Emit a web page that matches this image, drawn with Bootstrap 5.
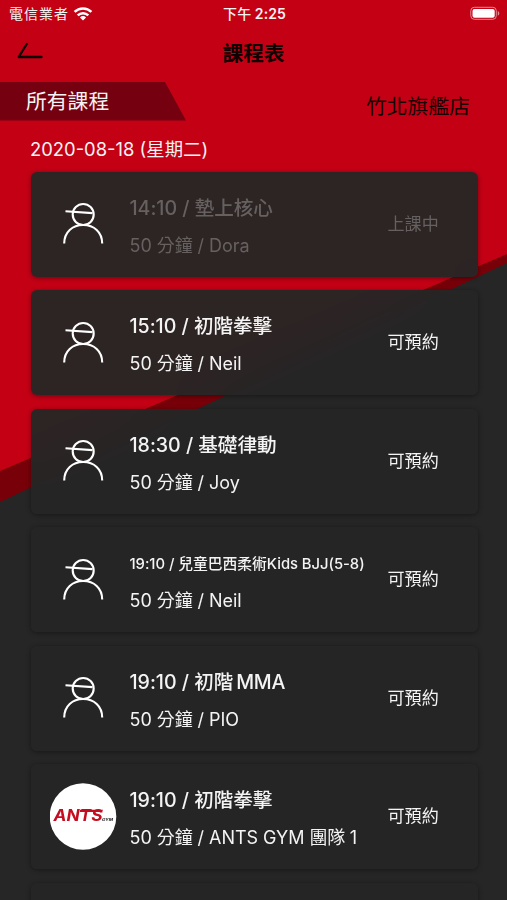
<!DOCTYPE html>
<html lang="zh-Hant">
<head>
<meta charset="utf-8">
<meta name="viewport" content="width=device-width, initial-scale=1">
<title>課程表</title>
<link href="https://cdn.jsdelivr.net/npm/bootstrap@5.3.0/dist/css/bootstrap.min.css" rel="stylesheet">
<style>
body{font-family:Inter,"Noto Sans CJK TC",sans-serif;background:#262626;color:#f4f4f4}
.screen{height:900px;isolation:isolate}
.backdrop{z-index:-1;width:507px;height:900px}
.status{height:27px;padding:0 7px 0 9px;font-size:14px;line-height:27px}
.status .side{flex:1 1 0}
.clock{font-weight:600;font-size:14px;letter-spacing:.1px}
.clock-half{font-weight:500}
.topbar{height:55px;padding:0 17px;color:#100000}
.topbar .side{flex:1 1 0}
.title{font-size:20.7px;font-weight:700;line-height:53px}
.filters{height:50px}
.tab-all{width:186px;height:38.5px;line-height:39px;padding-left:26px;font-size:20.8px;background:#75000f;clip-path:polygon(0 0,165px 0,100% 100%,0 100%)}
.branch{font-size:20.8px;line-height:50px;margin-right:37px;color:#180002}
.day{height:39.5px;padding-left:30px;font-size:18.4px;line-height:35px}
.lessons{padding:0 29.5px 0 30.5px}
.lesson{height:105px;margin-bottom:13.6px;padding:18px 0 0;border-radius:6px;background:rgba(38,38,38,.955);backdrop-filter:blur(14px);box-shadow:0 1px 5px rgba(0,0,0,.4)}
.avatar{width:67px;height:67px;margin:.5px 13px 0 19px}
.info{width:258px;white-space:nowrap}
.name,.coach{line-height:37px;height:37px}
.name{font-size:19.6px;font-weight:500;letter-spacing:-.03px}
.name.long{font-size:14.8px;line-height:39px}
.tight{letter-spacing:-.5px}
.mma{letter-spacing:-.3px;margin-left:3px}
.coach{font-size:18px;letter-spacing:-.05px}
.state{font-size:17.1px;line-height:67px}
.started{color:#666160}
</style>
<script src="https://cdn.jsdelivr.net/npm/bootstrap@5.3.0/dist/js/bootstrap.bundle.min.js"></script>
</head>
<body>
<svg class="d-none">
  <symbol id="person" viewBox="0 0 67 67"><g fill="none" stroke="#fff" stroke-width="2.1"><circle cx="33.2" cy="24.500" r="10.5"/><path d="M15.500 21.200l27 1.900M14.200 53.500C14.200 42 22.500 35 33.200 35S52.200 42 52.200 53.500"/></g></symbol>
</svg>
<main class="screen position-relative overflow-hidden">
  <svg class="backdrop position-absolute top-0 start-0" viewBox="0 0 507 900"><path fill="#c40015" d="M0 0h507v255L0 472z"/><path fill="#780009" d="M0 471L507 254v9L0 502z"/></svg>
  <header>
    <div class="status d-flex">
      <div class="side d-flex align-items-center"><span style="letter-spacing:1px">電信業者</span>
        <svg class="ms-1" width="20" height="14" viewBox="0 0 20 14"><g fill="none" stroke="#fff" stroke-width="2.5"><path d="M1.600 4.900a12 12 0 0 1 16.800 0M4.700 8.300a7.600 7.600 0 0 1 10.600 0"/></g><path fill="#fff" d="M6.900 10.400a4.500 4.500 0 0 1 6.200 0L10 13.600z"/></svg>
      </div>
      <div class="clock"><span class="clock-half">下午</span> 2:25</div>
      <div class="side d-flex align-items-center justify-content-end">
        <svg width="30" height="15" viewBox="0 0 30 15"><rect x=".8" y="1.300" width="25.500" height="12" rx="3.500" fill="none" stroke="#e58b92"/><rect x="2.500" y="3" width="22.200" height="8.700" rx="2" fill="#fff"/><path d="M27.800 5c2 .8 2 4 0 4.700z" fill="#e58b92"/></svg>
      </div>
    </div>
    <div class="topbar d-flex">
      <div class="side"><svg width="27" height="34" viewBox="0 0 27 34"><path d="M9.800 17L1.700 30H24.500" fill="none" stroke="#100000" stroke-width="2.300" stroke-linejoin="round" stroke-linecap="round"/></svg></div>
      <div class="title">課程表</div>
      <div class="side"></div>
    </div>
  </header>
  <div class="filters d-flex justify-content-between">
    <div class="tab-all">所有課程</div>
    <div class="branch">竹北旗艦店</div>
  </div>
  <div class="day">2020-08-18 (星期二)</div>
  <section class="lessons">
    <article class="lesson started d-flex"><svg class="avatar flex-shrink-0"><use href="#person"/></svg><div class="info"><div class="name">14:10 / 墊上核心</div><div class="coach">50 分鐘 / Dora</div></div><div class="state">上課中</div></article>
    <article class="lesson d-flex"><svg class="avatar flex-shrink-0"><use href="#person"/></svg><div class="info"><div class="name">15:10 / 初階拳擊</div><div class="coach">50 分鐘 / Neil</div></div><div class="state">可預約</div></article>
    <article class="lesson d-flex"><svg class="avatar flex-shrink-0"><use href="#person"/></svg><div class="info"><div class="name">18:30 / 基礎律動</div><div class="coach">50 分鐘 / Joy</div></div><div class="state">可預約</div></article>
    <article class="lesson d-flex"><svg class="avatar flex-shrink-0"><use href="#person"/></svg><div class="info"><div class="name long">19:10 / 兒童巴西柔術Kids BJJ(5-8)</div><div class="coach">50 分鐘 / Neil</div></div><div class="state">可預約</div></article>
    <article class="lesson d-flex"><svg class="avatar flex-shrink-0"><use href="#person"/></svg><div class="info"><div class="name">19:10 / 初階<span class="mma">MMA</span></div><div class="coach">50 分鐘 / PIO</div></div><div class="state">可預約</div></article>
    <article class="lesson d-flex">
      <svg class="avatar flex-shrink-0" viewBox="0 0 67 67"><circle cx="33" cy="33.500" r="33.300" fill="#fff"/><text transform="translate(3.500 38)" font-family="Inter,sans-serif" font-size="15.5" font-weight="700" font-style="italic" fill="#c40d20" textLength="49" lengthAdjust="spacingAndGlyphs">ANTS</text><path d="M30 26.700H53l-1 2.200H30z" fill="#c40d20"/><text x="52" y="38" font-family="Inter,sans-serif" font-size="4" font-weight="800" font-style="italic" fill="#333" textLength="11" lengthAdjust="spacingAndGlyphs">GYM</text></svg>
      <div class="info"><div class="name">19:10 / 初階拳擊</div><div class="coach">50 分鐘 / ANTS GYM 團隊<span class="tight"> 1</span></div></div><div class="state">可預約</div></article>
    <article class="lesson"></article>
  </section>
</main>
</body>
</html>
